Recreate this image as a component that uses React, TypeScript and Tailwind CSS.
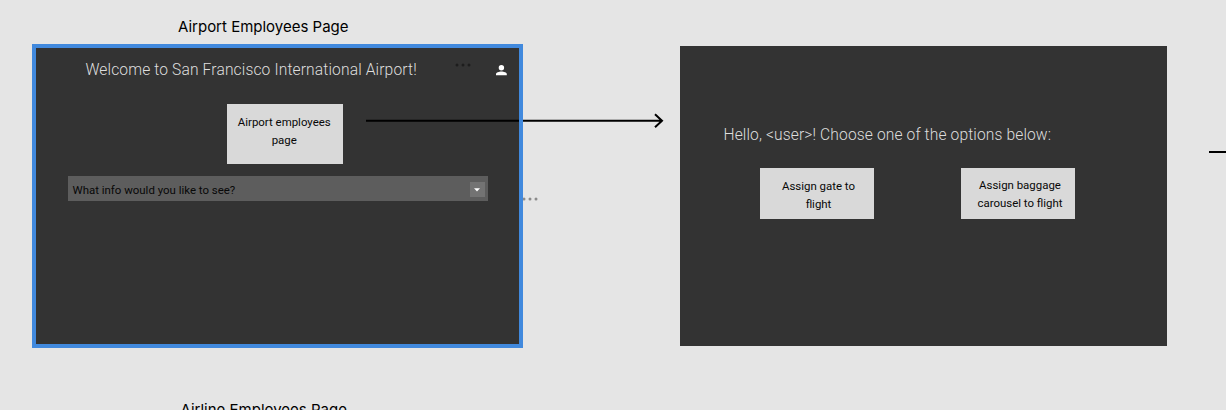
import type { ReactNode } from "react";

function OptionButton({ className, children }: { className: string; children: ReactNode }) {
  return (
    <button
      className={`flex flex-col items-center bg-[#d9d9d9] text-[11.45px] leading-[17.8px] whitespace-nowrap text-[#080808] ${className}`}
    >
      {children}
    </button>
  );
}

function UserIcon() {
  return (
    <svg className="mt-[17px] ml-auto h-[11px] w-[11px] shrink-0" viewBox="0 0 11 11" fill="#fff">
      <circle cx="5.4" cy="2.8" r="2.7" />
      <path d="M0 10.2V9C0 7.4 3 6.4 5.4 6.4S10.8 7.4 10.8 9v1.2Z" />
    </svg>
  );
}

function Dots({ className }: { className: string }) {
  return (
    <svg className={className} viewBox="0 0 16 4" fill="currentColor">
      <circle cx="2" cy="2" r="1.5" />
      <circle cx="8" cy="2" r="1.5" />
      <circle cx="14" cy="2" r="1.5" />
    </svg>
  );
}

function HomeFrame() {
  return (
    <section className="absolute top-[44px] left-[32px] flex h-[303.6px] w-[491px] flex-col border-4 border-[#4189dd] bg-[#333333]">
      <header className="flex h-[56px] shrink-0 items-start pr-[12px] pl-[49.5px]">
        <h1 className="mt-[10px] w-[331.5px] text-[15.6px] leading-6 font-light tracking-[0.13px] whitespace-nowrap text-[#dedede]">
          Welcome to San Francisco International Airport!
        </h1>
        <Dots className="mt-[14.5px] ml-[38px] h-[4px] w-[16px] shrink-0 text-[#1d1d1d]" />
        <UserIcon />
      </header>
      <OptionButton className="ml-[191px] h-[60px] w-[115.5px] shrink-0 pt-[10px] pr-[1px]">
        <span>Airport employees</span>
        <span>page</span>
      </OptionButton>
      <div className="mt-[12px] ml-[32px] flex h-[25px] w-[420.4px] shrink-0 items-center justify-between bg-[#5d5d5d] pr-[3.5px] pl-[4.5px]">
        <span className="pt-[2px] text-[11.45px] leading-[18px] whitespace-nowrap text-[#080808]">What info would you like to see?</span>
        <span className="mt-[2px] flex h-[15.5px] w-[15px] items-center justify-center bg-[#737373]">
          <svg className="h-[4px] w-[6px]" viewBox="0 0 6 4" fill="#fff">
            <path d="M0 .3h6L3 3.6Z" />
          </svg>
        </span>
      </div>
    </section>
  );
}

function OptionsFrame() {
  return (
    <section className="absolute top-[46px] left-[680px] flex h-[299.6px] w-[486.7px] flex-col bg-[#333333]">
      <h2 className="mt-[77px] ml-[43.5px] text-[15.6px] leading-6 font-light tracking-[0.12px] whitespace-nowrap text-[#dedede]">
        Hello, &lt;user&gt;! Choose one of the options below:
      </h2>
      <div className="mt-[21px] ml-[80px] flex gap-[87px]">
        <OptionButton className="h-[50.6px] w-[114px] pt-[10px] pl-[3px]">
          <span>Assign gate to</span>
          <span>flight</span>
        </OptionButton>
        <OptionButton className="h-[50.6px] w-[114px] pt-[9px] pl-[4px]">
          <span>Assign baggage</span>
          <span>carousel to flight</span>
        </OptionButton>
      </div>
    </section>
  );
}

export default function App() {
  return (
    <main className="relative h-[410px] w-[1226px] overflow-hidden bg-[#e5e5e5] font-['Roboto',sans-serif]">
      <div className="absolute top-[17px] left-[178px] font-['Inter',sans-serif] text-[15px] leading-5 whitespace-nowrap text-black">
        Airport Employees Page
      </div>
      <HomeFrame />
      <OptionsFrame />
      <Dots className="absolute top-[196.5px] left-[521.5px] h-[4px] w-[16px] text-[#8b8b8b]" />
      <svg className="absolute top-[112px] left-[365px] h-[18px] w-[300px]" viewBox="0 0 300 18" fill="none" stroke="#000" strokeWidth="2">
        <path d="M1 8.7H297M290 2.2l7 6.5-7 6.5" />
      </svg>
      <div className="absolute top-[44px] left-[519px] h-[303.6px] w-[4px] bg-[#4189dd]" />
      <svg className="absolute top-[151px] left-[1209px] h-[2px] w-[17px]" viewBox="0 0 17 2" stroke="#000" strokeWidth="2">
        <path d="M0 1h17" />
      </svg>
      <div className="absolute top-[400px] left-[180.5px] font-['Inter',sans-serif] text-[15px] leading-5 whitespace-nowrap text-black">
        Airline Employees Page
      </div>
    </main>
  );
}
